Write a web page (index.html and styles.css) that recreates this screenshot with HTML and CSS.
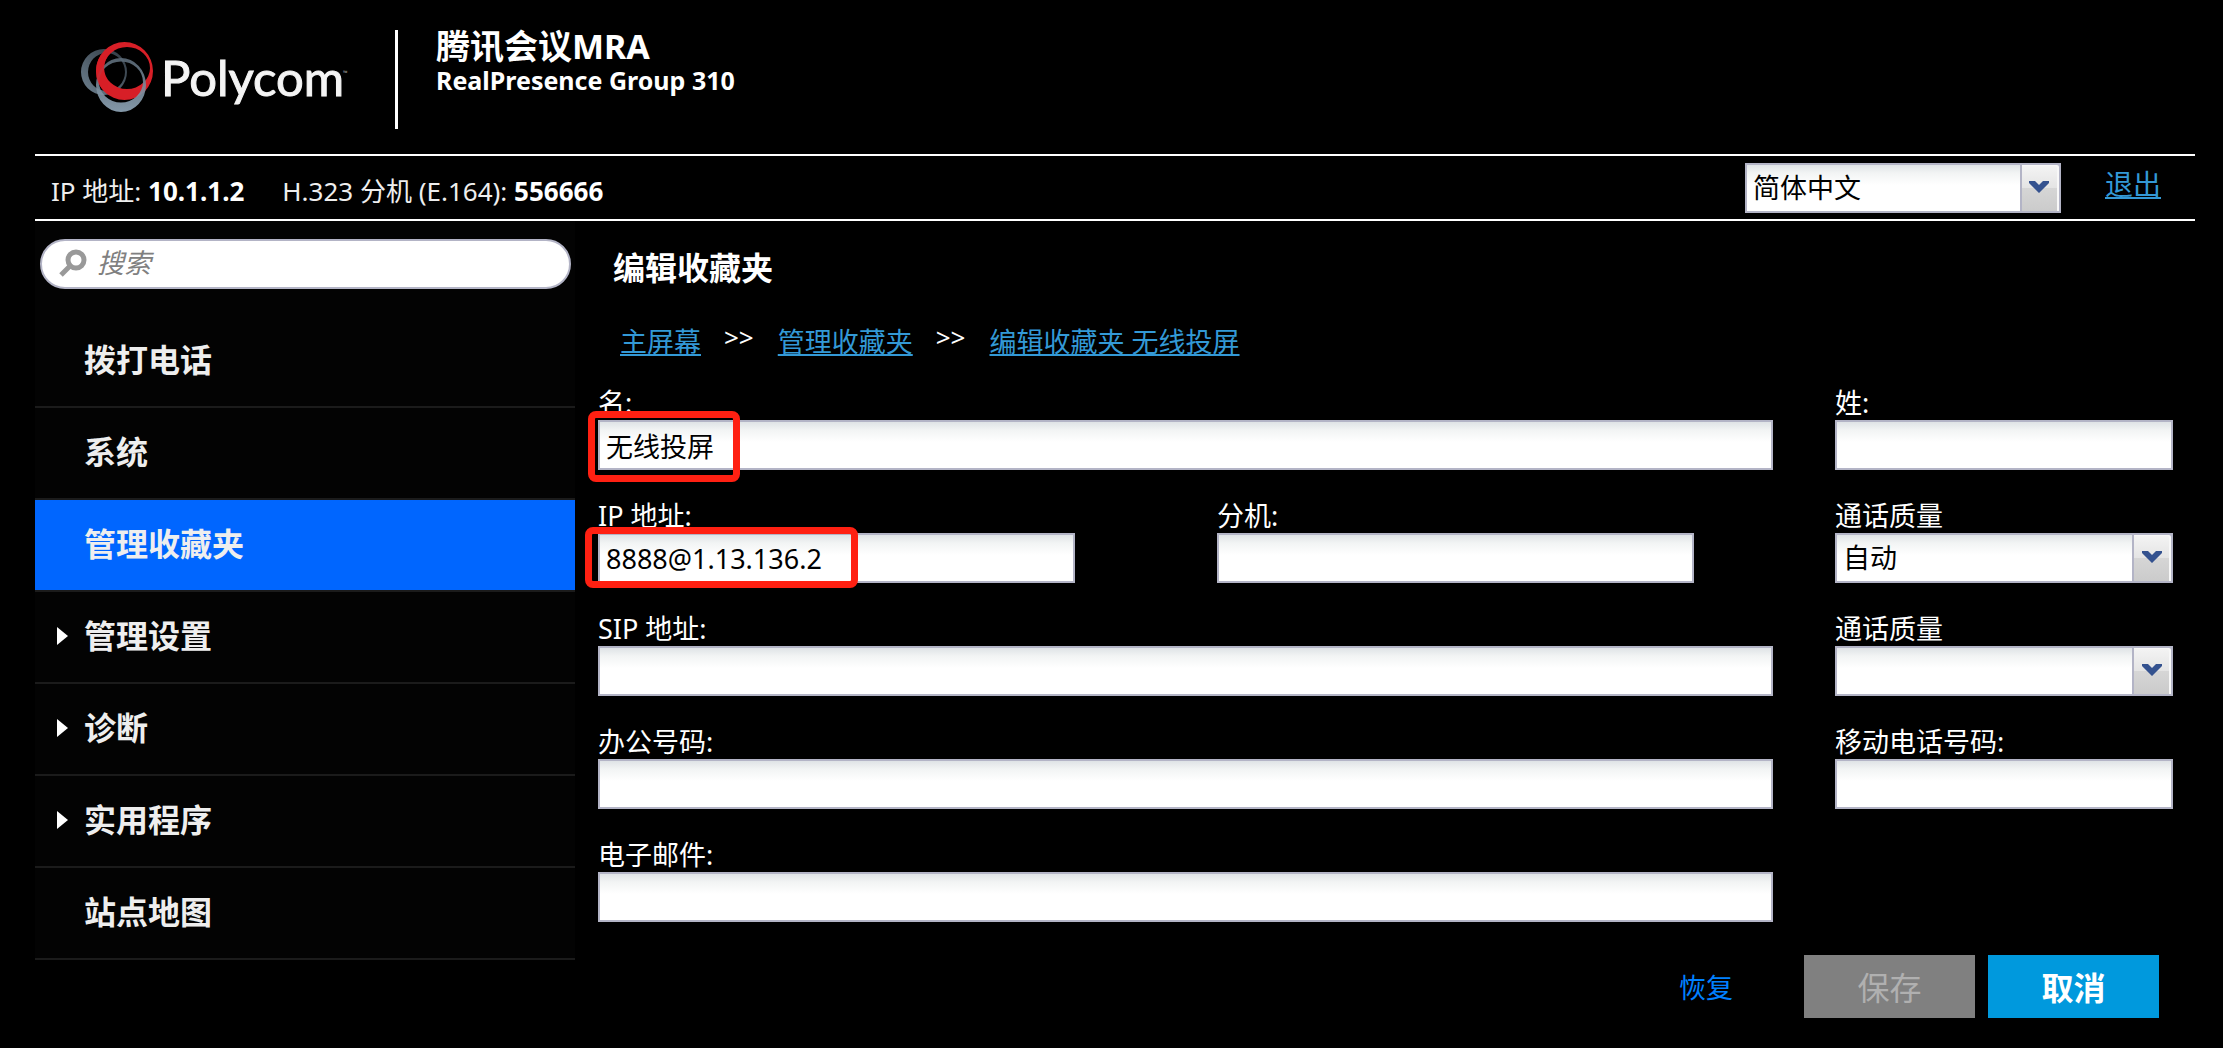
FILE: index.html
```html
<!DOCTYPE html>
<html lang="zh-CN">
<head>
<meta charset="utf-8">
<meta name="viewport" content="width=device-width, initial-scale=1">
<title>编辑收藏夹 - RealPresence Group 310</title>
<link rel="stylesheet" href="styles.css">
</head>
<body>
<header class="banner">
  <svg class="logo" viewBox="0 0 290 80" role="img" aria-label="Polycom">
    <defs>
      <linearGradient id="steel" x1="0" y1="0" x2="0" y2="1"><stop offset="0" stop-color="#5b6a77"/><stop offset="1" stop-color="#92a9bb"/></linearGradient>
      <linearGradient id="slate" x1="0" y1="1" x2="1" y2="0"><stop offset="0" stop-color="#6f8291"/><stop offset="1" stop-color="#2c343c"/></linearGradient>
    </defs>
    <path fill="url(#slate)" fill-rule="evenodd" d="M11 32a23 23 0 1 0 46 0a23 23 0 1 0-46 0zM18 32a18.500 19 0 1 0 37 0a18.500 19 0 1 0-37 0z"/>
    <path fill="#d71f27" fill-rule="evenodd" d="M26 31a28.500 29 0 1 0 57 0a28.500 29 0 1 0-57 0zM34 28a23 21 0 1 0 46 0a23 21 0 1 0-46 0z"/>
    <path fill="url(#steel)" fill-opacity="0.9" fill-rule="evenodd" d="M26 45a25 27 0 1 0 50 0a25 27 0 1 0-50 0zM29 42a22 20.500 0 1 0 44 0a22 20.500 0 1 0-44 0z"/>
    <path fill="#d71f27" d="M26 31a28.500 29 0 0 0 11 23L38 41q-4-5-4-13q0-6 3-11l-6-2q-5 7-5 16z" fill-opacity="0.85"/>
    <text class="logo-name" x="91" y="56">Polycom</text>
    <text class="logo-mark" x="273" y="35">™</text>
  </svg>
  <div class="device">
    <h1 class="device-name">腾讯会议MRA</h1>
    <p class="device-model">RealPresence Group 310</p>
  </div>
</header>

<div class="status">
  <p class="status-item">IP 地址: <strong>10.1.1.2</strong></p>
  <p class="status-item">H.323 分机 (E.164): <strong>556666</strong></p>
  <div class="status-tools">
    <div class="select language">
      <select aria-label="语言"><option>简体中文</option></select>
      <span class="select-arrow"><svg viewBox="0 0 22 14"><path d="M1 1h6l4 4 4-4h6v2L11 13 1 3z"/></svg></span>
    </div>
    <a class="logout" href="#">退出</a>
  </div>
</div>

<div class="columns">
  <nav class="sidebar" aria-label="导航">
    <label class="search">
      <svg class="search-icon" viewBox="0 0 28 28"><circle cx="17" cy="11" r="8"/><path d="M11 17L2 26"/></svg>
      <input type="search" placeholder="搜索" aria-label="搜索">
    </label>
    <ul class="menu">
      <li><a href="#">拨打电话</a></li>
      <li><a href="#">系统</a></li>
      <li><a class="current" href="#" aria-current="page">管理收藏夹</a></li>
      <li><a class="branch" href="#">管理设置</a></li>
      <li><a class="branch" href="#">诊断</a></li>
      <li><a class="branch" href="#">实用程序</a></li>
      <li><a href="#">站点地图</a></li>
    </ul>
  </nav>

  <main class="content">
    <h2 class="page-title">编辑收藏夹</h2>
    <div class="crumbs">
      <a href="#">主屏幕</a><span class="crumb-sep">&gt;&gt;</span>
      <a href="#">管理收藏夹</a><span class="crumb-sep">&gt;&gt;</span>
      <a href="#">编辑收藏夹 无线投屏</a>
    </div>
    <form class="form">
      <div class="field wide">
        <label for="first">名:</label>
        <input id="first" type="text" value="无线投屏">
        <span class="marker marker-name"></span>
      </div>
      <div class="field side"><label for="last">姓:</label><input id="last" type="text"></div>

      <div class="field half">
        <label for="ip">IP 地址:</label>
        <input id="ip" type="text" value="8888@1.13.136.2">
        <span class="marker marker-ip"></span>
      </div>
      <div class="field extension"><label for="ext">分机:</label><input id="ext" type="text"></div>
      <div class="field side">
        <label for="q1">通话质量</label>
        <div class="select">
          <select id="q1"><option>自动</option></select>
          <span class="select-arrow"><svg viewBox="0 0 22 14"><path d="M1 1h6l4 4 4-4h6v2L11 13 1 3z"/></svg></span>
        </div>
      </div>

      <div class="field wide"><label for="sip">SIP 地址:</label><input id="sip" type="text"></div>
      <div class="field side">
        <label for="q2">通话质量</label>
        <div class="select">
          <select id="q2"><option></option></select>
          <span class="select-arrow"><svg viewBox="0 0 22 14"><path d="M1 1h6l4 4 4-4h6v2L11 13 1 3z"/></svg></span>
        </div>
      </div>

      <div class="field wide"><label for="office">办公号码:</label><input id="office" type="text"></div>
      <div class="field side"><label for="mobile">移动电话号码:</label><input id="mobile" type="text"></div>

      <div class="field wide"><label for="mail">电子邮件:</label><input id="mail" type="text"></div>

      <div class="actions">
        <button class="revert" type="reset">恢复</button>
        <button class="button save" type="submit" disabled>保存</button>
        <button class="button cancel" type="button">取消</button>
      </div>
    </form>
  </main>
</div>
</body>
</html>
```
FILE: styles.css
```css
* { box-sizing: border-box; }

body {
  margin: 0;
  padding: 0 28px 0 35px;
  background: #000;
  color: #fff;
  font-family: "Noto Sans", "Noto Sans CJK SC", sans-serif;
  font-size: 27px;
  line-height: 34px;
}

h1, h2, p, ul { margin: 0; padding: 0; }
input, select, button { font: inherit; }
a { color: #3399d6; }

/* Banner */
.banner {
  display: flex;
  align-items: flex-start;
  height: 154px;
  padding: 30px 0 0 35px;
}
.logo { width: 290px; height: 80px; margin-top: 10px; }
.logo-name { font-family: Lato, sans-serif; font-size: 49px; fill: #f4f4f4; stroke: #f4f4f4; stroke-width: 1; }
.logo-mark { font-size: 6px; fill: #aaa; }
.device {
  min-height: 99px;
  margin-left: 35px;
  padding-left: 38px;
  border-left: 3px solid #fff;
}
.device-name { font-size: 34px; line-height: 32px; }
.device-model { font-size: 25px; line-height: 36px; font-weight: 700; }

/* Status bar */
.status {
  display: flex;
  align-items: center;
  gap: 38px;
  height: 67px;
  padding: 0 34px 0 16px;
  border-top: 2px solid #fff;
  border-bottom: 2px solid #fff;
}
.status-item { padding-top: 6px; color: #eee; font-size: 26px; }
.status-item strong { color: #fff; }
.status-tools { display: flex; align-items: center; gap: 44px; margin-left: auto; }
.language { width: 316px; }
.logout { padding-bottom: 8px; font-size: 28px; }

/* Text boxes and drop-downs */
.field input, .select select {
  width: 100%;
  height: 50px;
  padding: 0 6px;
  border: 2px solid #b3b4c6;
  border-radius: 0;
  background: linear-gradient(#dfe3e6, #f2f4f4 8px, #fff 20px);
  color: #000;
}
.select { display: grid; grid-template-columns: 1fr 41px; }
.select select { grid-area: 1 / 1 / 2 / 3; appearance: none; }
.select-arrow {
  grid-area: 1 / 2;
  z-index: 1;
  display: grid;
  place-items: center;
  padding: 0 2px 2px 0;
  border: 2px solid #b3b4c6;
  border-radius: 0 4px 0 0;
  background: linear-gradient(#f4f4f4, #e4e4e4 50%, #d6d6d6 50%, #cbcbcb);
  box-shadow: inset -2px 1px #f8f8f8;
  pointer-events: none;
}
.select-arrow svg { width: 22px; height: 14px; fill: #34528f; }

/* Sidebar */
.columns { display: grid; grid-template-columns: 540px 1fr; align-items: start; }
.sidebar { background: #030303; }
.search {
  display: flex;
  align-items: center;
  gap: 10px;
  height: 50px;
  margin: 18px 4px 27px 5px;
  padding: 0 20px 2px 17px;
  border: 2px solid #b3b4c6;
  border-radius: 25px;
  background: #fff;
}
.search-icon { width: 28px; height: 28px; fill: none; stroke: #999; stroke-width: 5; }
.search input {
  flex: 1;
  min-width: 0;
  padding: 0;
  border: 0;
  outline: 0;
  background: none;
  font-style: italic;
}
.search input::placeholder { color: #808080; }
.menu { list-style: none; }
.menu li { border-bottom: 2px solid #1b1b1b; }
.menu a {
  display: flex;
  align-items: center;
  height: 90px;
  padding: 0 0 2px 49px;
  color: #eee;
  font-size: 32px;
  font-weight: 700;
  text-decoration: none;
}
.menu .current { background: #06f; }
.menu .branch { padding-left: 22px; }
.branch::before {
  content: "";
  width: 11px;
  height: 18px;
  margin-right: 16px;
  background: #fff;
  clip-path: polygon(0 0, 100% 50%, 0 100%);
}

/* Content */
.content { padding: 28px 22px 0 23px; }
.page-title { padding-left: 15px; font-size: 32px; line-height: 38px; }
.crumbs { display: flex; margin-top: 38px; padding-left: 22px; }
.crumb-sep { margin: -5px 24px 0 23px; line-height: 34px; font-size: 26px; }

.form {
  display: grid;
  grid-template-columns: 477fr 142fr 477fr 79fr 62fr 338fr;
  row-gap: 29px;
  margin-top: 27px;
}
.field { position: relative; min-width: 0; }
.field label { display: block; }
.field input { display: block; }
.wide { grid-column: 1 / 5; }
.half { grid-column: 1; }
.extension { grid-column: 3; }
.side { grid-column: 6; }

/* Red callouts drawn over the form */
.marker {
  position: absolute;
  border: 7px solid #ff2012;
  border-radius: 8px;
  pointer-events: none;
}
.marker-name { left: -10px; top: 25px; width: 152px; height: 71px; }
.marker-ip { left: -13px; top: 28px; width: 273px; height: 61px; }

.actions {
  grid-column: 1 / -1;
  display: flex;
  justify-content: flex-end;
  gap: 13px;
  padding: 4px 14px 30px 0;
}
.actions button { padding: 2px 0 0; border: 0; }
.actions .button { width: 171px; height: 63px; font-size: 32px; }
.actions .revert { margin-right: 58px; background: none; color: #0080ff; }
.save { background: #808080; color: #b0b0b0; }
.cancel { background: #0099dd; color: #fff; font-weight: 700; }
```
